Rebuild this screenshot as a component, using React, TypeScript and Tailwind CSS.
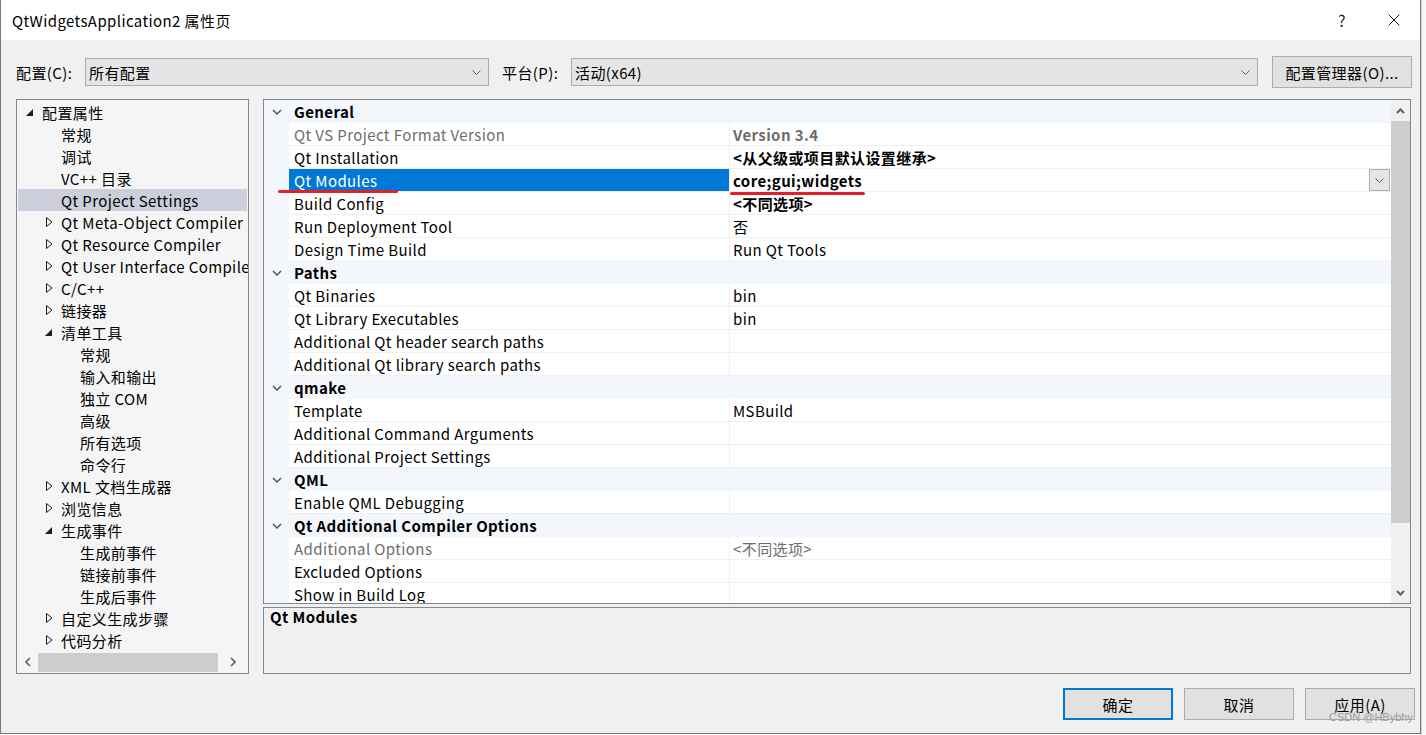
import React from 'react';

type TreeItem = { label: string; level: number; arrow?: 'open' | 'closed'; selected?: boolean };

const treeItems: TreeItem[] = [
  { label: '配置属性', level: 0, arrow: 'open' },
  { label: '常规', level: 1 },
  { label: '调试', level: 1 },
  { label: 'VC++ 目录', level: 1 },
  { label: 'Qt Project Settings', level: 1, selected: true },
  { label: 'Qt Meta-Object Compiler', level: 1, arrow: 'closed' },
  { label: 'Qt Resource Compiler', level: 1, arrow: 'closed' },
  { label: 'Qt User Interface Compiler', level: 1, arrow: 'closed' },
  { label: 'C/C++', level: 1, arrow: 'closed' },
  { label: '链接器', level: 1, arrow: 'closed' },
  { label: '清单工具', level: 1, arrow: 'open' },
  { label: '常规', level: 2 },
  { label: '输入和输出', level: 2 },
  { label: '独立 COM', level: 2 },
  { label: '高级', level: 2 },
  { label: '所有选项', level: 2 },
  { label: '命令行', level: 2 },
  { label: 'XML 文档生成器', level: 1, arrow: 'closed' },
  { label: '浏览信息', level: 1, arrow: 'closed' },
  { label: '生成事件', level: 1, arrow: 'open' },
  { label: '生成前事件', level: 2 },
  { label: '链接前事件', level: 2 },
  { label: '生成后事件', level: 2 },
  { label: '自定义生成步骤', level: 1, arrow: 'closed' },
  { label: '代码分析', level: 1, arrow: 'closed' },
];

type GridRow = { h?: string; n?: string; v?: string; bold?: boolean; dim?: boolean; sel?: boolean };

const gridRows: GridRow[] = [
  { h: 'General' },
  { n: 'Qt VS Project Format Version', v: 'Version 3.4', dim: true, bold: true },
  { n: 'Qt Installation', v: '<从父级或项目默认设置继承>', bold: true },
  { n: 'Qt Modules', v: 'core;gui;widgets', bold: true, sel: true },
  { n: 'Build Config', v: '<不同选项>', bold: true },
  { n: 'Run Deployment Tool', v: '否' },
  { n: 'Design Time Build', v: 'Run Qt Tools' },
  { h: 'Paths' },
  { n: 'Qt Binaries', v: 'bin' },
  { n: 'Qt Library Executables', v: 'bin' },
  { n: 'Additional Qt header search paths' },
  { n: 'Additional Qt library search paths' },
  { h: 'qmake' },
  { n: 'Template', v: 'MSBuild' },
  { n: 'Additional Command Arguments' },
  { n: 'Additional Project Settings' },
  { h: 'QML' },
  { n: 'Enable QML Debugging' },
  { h: 'Qt Additional Compiler Options' },
  { n: 'Additional Options', v: '<不同选项>', dim: true },
  { n: 'Excluded Options' },
  { n: 'Show in Build Log' },
];

const Chevron = ({ className = '' }: { className?: string }) => (
  <svg width="9" height="5" viewBox="0 0 9 5" className={className}>
    <polyline points="0.5,0.5 4.5,4.5 8.5,0.5" fill="none" stroke="#606060" strokeWidth="1" />
  </svg>
);

const Combo = ({ text, width }: { text: string; width: string }) => (
  <div className={`${width} h-[28px] bg-[#e5e5e5] border border-[#adadad] flex items-center justify-between pl-[3px] pr-[7px]`}>
    <span>{text}</span>
    <Chevron />
  </div>
);

const TreeArrow = ({ kind }: { kind: 'open' | 'closed' }) =>
  kind === 'open' ? (
    <svg width="7" height="7" viewBox="0 0 7 7">
      <polygon points="7,0 7,7 0,7" fill="#1e1e1e" />
    </svg>
  ) : (
    <svg width="7" height="10" viewBox="0 0 7 10">
      <polygon points="0.5,0.5 6,5 0.5,9.5" fill="none" stroke="#1e1e1e" strokeWidth="1" />
    </svg>
  );

const Tree = () => (
  <div className="w-[233px] h-[575px] border border-[#828790] bg-[#f5f5f5] flex flex-col">
    <div className="flex-1 pt-[1px] overflow-hidden">
      {treeItems.map((it, i) => (
        <div
          key={i}
          className={`h-[22px] mx-[1px] flex items-center whitespace-nowrap relative ${it.selected ? 'bg-[#cccedb]' : ''}`}
          style={{ paddingLeft: 24 + 19 * it.level }}
        >
          {it.arrow && (
            <span
              className="absolute flex items-center"
              style={{ left: it.arrow === 'open' ? 8 + 19 * it.level : 9 + 19 * it.level }}
            >
              <TreeArrow kind={it.arrow} />
            </span>
          )}
          <span>{it.label}</span>
        </div>
      ))}
    </div>
    <div className="h-[20px] mb-[1px] mx-[1px] flex items-center">
      <div className="w-[20px] flex justify-center">
        <svg width="6" height="10" viewBox="0 0 6 10">
          <polyline points="5,1 1,5 5,9" fill="none" stroke="#606060" strokeWidth="1.6" />
        </svg>
      </div>
      <div className="w-[180px] h-[19px] bg-[#cdcdcd]" />
      <div className="flex-1 flex justify-center">
        <svg width="6" height="10" viewBox="0 0 6 10">
          <polyline points="1,1 5,5 1,9" fill="none" stroke="#606060" strokeWidth="1.6" />
        </svg>
      </div>
    </div>
  </div>
);

const PropRow = ({ r }: { r: GridRow }) => {
  if (r.h) {
    return (
      <div className="h-[23px] bg-[#f3f6fb] flex items-center">
        <div className="w-[25px] flex justify-center pl-[1px]">
          <svg width="10" height="6" viewBox="0 0 10 6">
            <polyline points="1,1 5,5 9,1" fill="none" stroke="#555555" strokeWidth="1.5" />
          </svg>
        </div>
        <span className="pl-[5px] font-bold">{r.h}</span>
      </div>
    );
  }
  return (
    <div className="h-[23px] flex relative">
      <div className="w-[25px] bg-[#f3f6fb]" />
      <div
        className={`w-[440px] flex items-center pl-[5px] border-b border-[#f0f0f0] ${
          r.sel ? 'bg-[#0078d7] text-white border-[#0078d7]' : 'bg-white'
        } ${r.dim ? 'text-[#6d6d6d]' : ''}`}
      >
        {r.n}
      </div>
      <div
        className={`flex-1 bg-white border-l border-b border-[#f0f0f0] flex items-center pl-[3px] ${
          r.bold ? 'font-bold' : ''
        } ${r.dim ? 'text-[#6d6d6d]' : ''}`}
      >
        <span className="flex-1">{r.v}</span>
        {r.sel && (
          <div className="w-[21px] h-[22px] mr-[1px] bg-[#e5e5e5] border border-[#adadad] flex items-center justify-center">
            <Chevron />
          </div>
        )}
      </div>
      {r.sel && (
        <>
          <div className="absolute left-[14px] top-[21px] w-[120px] h-[3px] rounded-full bg-[#e3202a] z-10" />
          <div className="absolute left-[466px] top-[23px] w-[135px] h-[3px] rounded-full bg-[#e3202a] z-10" />
        </>
      )}
    </div>
  );
};

const Grid = () => (
  <div className="w-[1148px] h-[575px] flex flex-col gap-[3px]">
    <div className="h-[505px] border border-[#828790] flex bg-white">
      <div className="flex-1 overflow-hidden">
        {gridRows.map((r, i) => (
          <PropRow key={i} r={r} />
        ))}
      </div>
      <div className="w-[19px] bg-[#f0f0f0] flex flex-col">
        <div className="h-[21px] flex items-center justify-center">
          <svg width="9" height="6" viewBox="0 0 9 6">
            <polyline points="1,5 4.5,1.5 8,5" fill="none" stroke="#606060" strokeWidth="2" />
          </svg>
        </div>
        <div className="h-[402px] bg-[#cdcdcd]" />
        <div className="flex-1 flex items-end justify-center pb-[7px]">
          <svg width="9" height="6" viewBox="0 0 9 6">
            <polyline points="1,1 4.5,4.5 8,1" fill="none" stroke="#606060" strokeWidth="2" />
          </svg>
        </div>
      </div>
    </div>
    <div className="flex-1 border border-[#828790] bg-[#f0f0f0] px-[6px] pt-[1px]">
      <span className="font-bold">Qt Modules</span>
    </div>
  </div>
);

const Button = ({ text, primary }: { text: string; primary?: boolean }) => (
  <div
    className={`w-[110px] h-[32px] bg-[#e1e1e1] flex items-center justify-center ${
      primary ? 'border-2 border-[#0078d7]' : 'border border-[#adadad]'
    }`}
  >
    {text}
  </div>
);

export default function App() {
  return (
    <div className="w-[1426px] h-[735px] bg-[#fafafa] flex overflow-hidden font-['Noto_Sans_CJK_SC',sans-serif] text-[15px] tracking-[0.4px] text-black leading-none relative">
      <div className="w-[1421px] h-[734px] border-l border-r border-b border-[#7a7a7a] bg-[#f0f0f0] flex flex-col">
        <div className="h-[40px] bg-white flex items-center pl-[11px] pr-[20px] relative">
          <span className="flex-1">QtWidgetsApplication2 属性页</span>
          <span className="w-[20px] text-center text-[16px] text-[#222] mr-[36px]">?</span>
          <svg width="12" height="12" viewBox="0 0 12 12">
            <line x1="0.5" y1="0.5" x2="11.5" y2="11.5" stroke="#222" strokeWidth="1" />
            <line x1="11.5" y1="0.5" x2="0.5" y2="11.5" stroke="#222" strokeWidth="1" />
          </svg>
        </div>
        <div className="mt-[18px] h-[28px] flex items-center pl-[15px]">
          <span className="w-[69px]">配置(C):</span>
          <Combo text="所有配置" width="w-[404px]" />
          <span className="ml-[13px] w-[69px]">平台(P):</span>
          <Combo text="活动(x64)" width="w-[687px]" />
          <div className="ml-[14px] w-[140px] h-[32px] bg-[#e1e1e1] border border-[#adadad] flex items-center justify-center">
            配置管理器(O)...
          </div>
        </div>
        <div className="mt-[13px] flex pl-[15px] gap-[14px]">
          <Tree />
          <Grid />
        </div>
        <div className="mt-[14px] flex justify-end gap-[11px] pr-[5px]">
          <Button text="确定" primary />
          <Button text="取消" />
          <Button text="应用(A)" />
        </div>
      </div>
      <div className="flex-1 bg-[#f7f7f7] border-l border-[#d0d0d0]" />
      <span className="absolute left-[1329px] top-[712px] text-[11px] tracking-normal text-[#9a9a9a] font-['Liberation_Sans',sans-serif]">
        CSDN @HBybhy
      </span>
    </div>
  );
}
